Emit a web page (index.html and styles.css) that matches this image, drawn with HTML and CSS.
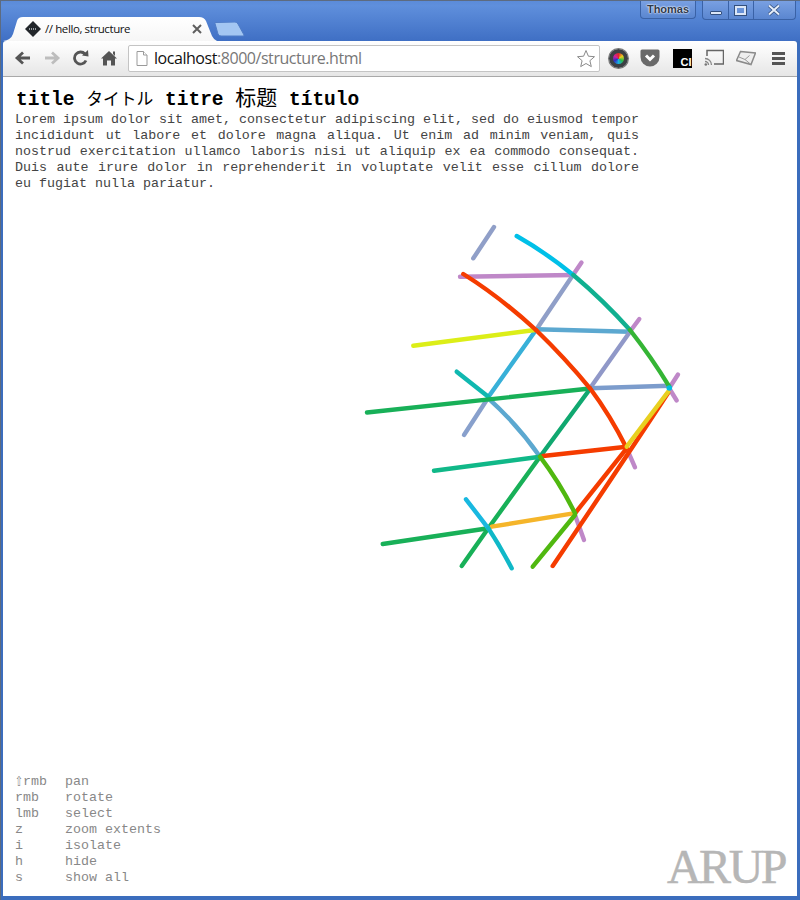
FILE: index.html
```html
<!DOCTYPE html>
<html lang="en">
<head>
  <meta charset="UTF-8">
  <title>// hello, structure</title>
  <link rel="stylesheet" href="styles.css">
</head>
<body>
  <div class="window">
    <div class="titlebar">
      <div class="controls">
        <div class="user-btn">Thomas</div>
        <div class="win-btns">
          <div class="win-btn min"><span class="min-bar"></span></div>
          <div class="win-btn max"><span class="max-box"></span></div>
          <div class="win-btn close">
            <svg width="16" height="12" viewBox="0 0 16 12"><path class="x-glow" d="M3 1.5L13 10.5M13 1.5L3 10.5"/><path class="x-mark" d="M3 1.5L13 10.5M13 1.5L3 10.5"/></svg>
          </div>
        </div>
      </div>
      <div class="tabstrip">
        <div class="tab">
          <svg class="favicon" width="16" height="16" viewBox="0 0 16 16"><path class="fav-bg" d="M8 0L16 8L8 16L0 8Z"/><path class="fav-mark" d="M4 8h8"/></svg>
          <span class="tab-title">// hello, structure</span>
          <svg class="tab-close" width="10" height="10" viewBox="0 0 10 10"><path d="M1 1L9 9M9 1L1 9"/></svg>
        </div>
        <svg class="new-tab" width="32" height="16" viewBox="0 0 32 16"><path d="M2 1.5Q1 .5 3 .5L22 0Q24 0 25 2L31 13Q31.500 14 30 14L8 14Q6 14 5 12Z"/></svg>
      </div>
    </div>

    <div class="toolbar">
      <div class="nav">
        <svg class="nav-icon" width="18" height="16" viewBox="0 0 18 16"><path class="arrow-back" d="M16 8H4M9 2.500L3 8L9 13.500"/></svg>
        <svg class="nav-icon" width="18" height="16" viewBox="0 0 18 16"><path class="arrow-fwd" d="M2 8H14M9 2.500L15 8L9 13.500"/></svg>
        <svg class="nav-icon" width="18" height="16" viewBox="0 0 18 16"><path class="reload" d="M14 10.500A6 6 0 1 1 13 4"/><path class="reload-tip" d="M10 5.500L16.500 6.500L16 0Z"/></svg>
        <svg class="nav-icon" width="18" height="16" viewBox="1 0 18 16"><path class="home" d="M9 1L17 8.500H15V15.500H11V10.500H7V15.500H3V8.500H1Z"/><path class="home" d="M13 1.500H15V6L13 4Z"/></svg>
      </div>
      <div class="omnibox">
        <svg class="page-icon" width="12" height="15" viewBox="0 0 12 15"><path d="M1 .5H7.500L11 4V14.500H1Z"/><path d="M7.500 .5V4H11"/></svg>
        <span class="url"><span class="host">localhost</span>:8000/structure.html</span>
        <svg class="star" width="20" height="19" viewBox="0 0 20 19"><path d="M10 1.500L12.400 7.200L18.500 7.700L13.900 11.700L15.300 17.600L10 14.500L4.700 17.600L6.100 11.700L1.500 7.700L7.600 7.200Z"/></svg>
      </div>
      <div class="extensions">
        <div class="ext"><span class="wheel"></span></div>
        <div class="ext">
          <svg width="20" height="18" viewBox="0 0 20 18"><path class="pocket" d="M2 .5H18Q19.500 .5 19.500 2V8A9.500 9.500 0 0 1 .5 8V2Q.5 .5 2 .5Z"/><path class="pocket-mark" d="M6 6.500L10 10.500L14 6.500"/></svg>
        </div>
        <div class="ext"><span class="ci">CI</span></div>
        <div class="ext">
          <svg width="20" height="18" viewBox="0 0 20 18"><path class="cast" d="M3 7V1.500H19.500V15H10"/><path class="cast-wave" d="M1 9.500A6.500 6.500 0 0 1 7.500 16M1 12.500A3.500 3.500 0 0 1 4.500 16"/><circle class="cast-dot" cx="1.800" cy="15.500" r="1.300"/></svg>
        </div>
        <div class="ext">
          <svg width="20" height="16" viewBox="0 0 20 16"><path class="mail" d="M4.500 1.500L19.500 3L15 14.500L.5 10.500Z"/><path class="mail-line" d="M3 7L9 9.500L13.500 5.500M9 9.500L15 14.500"/></svg>
        </div>
        <div class="ext"><span class="menu"></span></div>
      </div>
    </div>

    <div class="content">
      <div class="intro">
        <h1>title <span class="cjk kana" lang="ja">タイトル</span> titre <span class="cjk hanzi" lang="zh">标题</span> título</h1>
        <p>Lorem ipsum dolor sit amet, consectetur adipiscing elit, sed do eiusmod tempor incididunt ut labore et dolore magna aliqua. Ut enim ad minim veniam, quis nostrud exercitation ullamco laboris nisi ut aliquip ex ea commodo consequat. Duis aute irure dolor in reprehenderit in voluptate velit esse cillum dolore eu fugiat nulla pariatur.</p>
      </div>

      <div class="keys">
        <span><span class="shift">⇧</span>rmb</span><span>pan</span>
        <span>rmb</span><span>rotate</span>
        <span>lmb</span><span>select</span>
        <span>z</span><span>zoom extents</span>
        <span>i</span><span>isolate</span>
        <span>h</span><span>hide</span>
        <span>s</span><span>show all</span>
      </div>

      <!-- model view, coordinates are window pixels -->
      <svg class="model" width="794" height="819" viewBox="3 77 794 819">
        <path class="purple" d="M460 276.700L573 275"/>
        <path class="purple" d="M573 275L581.500 262.500"/>
        <path class="purple" d="M630 331.500L639.300 319"/>
        <path class="purple" d="M669 388.500L678 374.500"/>
        <path class="purple" d="M669 388L676.700 400.500"/>
        <path class="purple" d="M626.700 448.300L635 467.300"/>
        <path class="purple" d="M575 515L584 540"/>

        <path class="slate" d="M473.300 258.300L494 227"/>
        <path class="slate" d="M573 275L536 330"/>
        <path class="sky" d="M536 330L488.300 397"/>
        <path class="slate-2" d="M488 398L464 435"/>
        <path class="sky-2" d="M536 329.300L630 331.700"/>
        <path class="slate-3" d="M630 331.700L590 388.300"/>
        <path class="slate-4" d="M590 388.300L669.300 385.700"/>
        <path class="sky-2" d="M488.300 398.300Q517 424 540 456.700"/>

        <path class="cyan" d="M516.700 236Q545 252 573.300 275"/>
        <path class="teal" d="M573.300 275Q603 300 630 330"/>
        <path class="green-3" d="M630 330Q652 358 669.300 386.700"/>
        <path class="teal-2" d="M456.700 371.700L488.300 396.700"/>

        <path class="yellow-green" d="M413.300 345.700L535 330"/>
        <path class="green" d="M367 412.500L590 388.500"/>
        <path class="green-2" d="M590 389L540 456.700"/>
        <path class="green" d="M540 456.700L488.300 528.300"/>
        <path class="green" d="M488.300 528.300L461.700 566"/>
        <path class="teal-3" d="M434 470.700L540 456.700"/>
        <path class="green" d="M382.700 544L488.300 528.300"/>

        <path class="red" d="M463.300 274Q500 297 536 330"/>
        <path class="red" d="M536 330Q565 358 590 388.300"/>
        <path class="red" d="M590 388.300Q610 415 626.700 448.300"/>
        <path class="red" d="M543 456L626.700 446.700"/>
        <path class="red" d="M626.700 448.300L575 513.300"/>
        <path class="red" d="M668 393Q627 456 552.700 566"/>

        <path class="yellow" d="M626.700 446.700L668.300 391.700"/>
        <path class="orange" d="M491.700 526.700L573.300 513.300"/>
        <path class="lime" d="M540 456.700Q560 483 575 513.300"/>
        <path class="lime" d="M575 515L532.700 566.700"/>
        <path class="cyan-2" d="M466 499.300L488.300 528.300"/>
        <path class="cyan-3" d="M488.300 528.300Q500 546 511.700 568.300"/>
        <circle class="node" cx="669.300" cy="388" r="2.800"/>
      </svg>

      <div class="logo">ARUP</div>
    </div>
  </div>
</body>
</html>
```

FILE: styles.css
```css
html, body {
  margin: 0;
  padding: 0;
  background-color: #fff;
}
.window {
  box-sizing: border-box;
  width: 800px;
  height: 900px;
  display: flex;
  flex-direction: column;
  padding: 0 3px 4px 2px;
  background: #3b6dbd;
  border: 1px solid #5d6b80;
  border-width: 1px 0 0 1px;
  overflow: hidden;
}

/* title bar */
.titlebar {
  margin: 0 -3px 0 -2px;
  padding: 0 3px 0 2px;
  height: 40px;
  flex: none;
  display: flex;
  flex-direction: column;
  background: linear-gradient(#5b8bd9, #5f8fdc 12%, #3f6fc4);
}
.controls {
  height: 16px;
  flex: none;
  display: flex;
  justify-content: flex-end;
  gap: 6px;
  padding-right: 1px;
}
.user-btn {
  box-sizing: border-box;
  width: 56px;
  height: 18px;
  border: 1px solid #3a62a6;
  border-top: none;
  border-radius: 0 0 4px 4px;
  background: linear-gradient(#79a0e2, #5a86d0);
  color: #2e3a4c;
  font: bold 11px/16px "Liberation Sans", sans-serif;
  text-align: center;
  text-shadow: 0 0 2px #fff, 0 0 2px #fff;
}
.win-btns {
  display: flex;
  height: 18px;
  border: 1px solid #3a62a6;
  border-top: none;
  border-radius: 0 0 4px 4px;
  background: linear-gradient(#79a0e2, #5a86d0);
}
.win-btn {
  display: flex;
  align-items: center;
  justify-content: center;
  border-right: 1px solid #3a62a6;
}
.min { width: 25px; }
.max { width: 24px; }
.close { width: 39px; padding-right: 2px; border-right: none; }
.min-bar {
  width: 10px;
  height: 2px;
  margin-top: 5px;
  border: 1px solid #34507e;
  border-radius: 1px;
  background: #dce7f7;
}
.max-box {
  box-sizing: border-box;
  width: 11px;
  height: 9px;
  margin-right: 2px;
  border: 2px solid #dce7f7;
  outline: 1px solid #34507e;
}
.x-glow {
  fill: none;
  stroke: #34507e;
  stroke-width: 3.5;
}
.x-mark {
  fill: none;
  stroke: #e6eefa;
  stroke-width: 2;
}
.tabstrip {
  height: 24px;
  flex: none;
  display: flex;
  align-items: flex-start;
}
.tab {
  box-sizing: border-box;
  width: 214px;
  height: 24px;
  flex: none;
  display: flex;
  align-items: center;
  padding: 0 15px 1px 22px;
  background: linear-gradient(#fff, #f6f6f6);
  clip-path: path("M0 24Q8 23 10 17L14 4Q15 0 20 0H196Q201 0 203 4L209 19Q211 23 214 24Z");
}
.favicon { flex: none; }
.fav-bg { fill: #22262a; }
.fav-mark {
  stroke: #9aa0a4;
  stroke-width: 2;
  stroke-dasharray: 1 1;
}
.tab-title {
  flex: 1;
  margin-left: 4px;
  font: 11.500px "Open Sans", sans-serif;
  letter-spacing: -.4px;
  color: #111;
}
.tab-close {
  flex: none;
  fill: none;
  stroke: #5f5f5f;
  stroke-width: 2;
}
.new-tab {
  flex: none;
  margin: 5px 0 0 -4px;
}
.new-tab path {
  fill: #a3c6f2;
  stroke: #4f7cc6;
}

/* toolbar */
.toolbar {
  box-sizing: border-box;
  height: 36px;
  flex: none;
  display: flex;
  align-items: center;
  padding: 0 0 1px 11px;
  background: linear-gradient(#fff, #f8f8f8 30%, #e6e6e6);
  border-bottom: 1px solid #a9a9a9;
  border-radius: 3px 3px 0 0;
}
.nav {
  display: flex;
  gap: 11px;
}
.nav-icon { flex: none; }
.arrow-back, .arrow-fwd {
  fill: none;
  stroke-width: 2.800;
}
.arrow-back { stroke: #555; }
.arrow-fwd { stroke: #bdbdbd; }
.reload {
  fill: none;
  stroke: #555;
  stroke-width: 2.800;
}
.reload-tip { fill: #555; }
.home { fill: #555; }
.omnibox {
  box-sizing: border-box;
  width: 472px;
  height: 27px;
  margin-left: 9px;
  flex: none;
  display: flex;
  align-items: center;
  padding: 0 3px 0 7px;
  background: #fff;
  border: 1px solid #c4c4c4;
  border-radius: 2px;
}
.page-icon {
  flex: none;
  fill: #fff;
  stroke: #9a9a9a;
}
.url {
  flex: 1;
  margin-left: 6px;
  font: 16px "Open Sans", sans-serif;
  letter-spacing: -.45px;
  color: #777;
}
.host { color: #111; }
.star {
  flex: none;
  fill: #fff;
  stroke: #8a8a8a;
}
.extensions {
  display: flex;
  margin-left: 2px;
}
.ext {
  width: 32px;
  height: 24px;
  display: flex;
  align-items: center;
  justify-content: center;
}
.wheel {
  box-sizing: border-box;
  width: 19px;
  height: 19px;
  border: 4px solid #3c4044;
  border-radius: 50%;
  background: conic-gradient(#e2262a, #e8d020, #2ab84a, #18b0e0, #3030c0, #d020a0, #e2262a);
  box-shadow: 0 0 0 1px #777;
}
.pocket { fill: #6a6a6a; }
.pocket-mark {
  fill: none;
  stroke: #fff;
  stroke-width: 3;
}
.ci {
  box-sizing: border-box;
  width: 19px;
  height: 19px;
  display: flex;
  align-items: flex-end;
  justify-content: flex-end;
  background: #000;
  color: #fff;
  font: bold 11px/11px "Liberation Sans", sans-serif;
}
.cast {
  fill: none;
  stroke: #666;
  stroke-width: 1.500;
}
.cast-wave {
  fill: none;
  stroke: #888;
  stroke-width: 1.300;
}
.cast-dot { fill: #777; }
.mail {
  fill: #eee;
  stroke: #8a8a8a;
  stroke-width: 1.500;
}
.mail-line {
  fill: none;
  stroke: #999;
}
.menu {
  box-sizing: border-box;
  width: 13px;
  height: 13px;
  border-top: 3px solid #555;
  border-bottom: 3px solid #555;
  background: linear-gradient(transparent 2px, #555 2px, #555 5px, transparent 5px);
}

/* page */
.content {
  flex: 1;
  position: relative;
  display: flex;
  flex-direction: column;
  justify-content: space-between;
  padding: 9px 12px 10px 12px;
  background: #fff;
  font-family: "Liberation Mono", "Courier New", monospace;
}
.intro {
  width: 624px;
}
h1 {
  margin: 0 0 0 1px;
  font-size: 19.500px;
  line-height: 24px;
  font-weight: bold;
  color: #000;
}
.cjk {
  font-family: "Noto Sans CJK JP", "Noto Sans CJK SC", sans-serif;
  font-weight: normal;
  line-height: 20px;
}
.kana {
  font-size: 16.800px;
}
.hanzi {
  font-size: 21px;
}
p {
  margin: 0;
  font-size: 13.330px;
  line-height: 16px;
  color: #444;
  text-align: justify;
}
.keys {
  display: grid;
  grid-template-columns: 50px auto;
  justify-content: start;
  font-size: 13.330px;
  line-height: 16px;
  color: #888;
}
.shift {
  display: inline-block;
  width: 8px;
  font-family: "DejaVu Sans", sans-serif;
  font-size: 9.500px;
  line-height: 14px;
  transform: scaleY(1.4);
}
.model {
  position: absolute;
  left: 0;
  top: 0;
  pointer-events: none;
}
.model path {
  fill: none;
  stroke-width: 4.400;
  stroke-linecap: round;
}
.purple { stroke: #bf88c8; }
.slate { stroke: #909fc8; }
.slate-2 { stroke: #88a0cc; }
.slate-3 { stroke: #9098c8; }
.slate-4 { stroke: #7c9ccc; }
.sky { stroke: #38b0d8; }
.sky-2 { stroke: #5ca8d0; }
.cyan { stroke: #00c0e8; }
.cyan-2 { stroke: #18b8e0; }
.cyan-3 { stroke: #10b8c8; }
.teal { stroke: #10b090; }
.teal-2 { stroke: #10b8b0; }
.teal-3 { stroke: #10b888; }
.green { stroke: #18b058; }
.green-2 { stroke: #10a870; }
.green-3 { stroke: #35b535; }
.lime { stroke: #50b810; }
.yellow-green { stroke: #dcee18; }
.yellow { stroke: #e8d020; }
.orange { stroke: #f5b52a; }
.red { stroke: #f53c00; }
.node { fill: #00c0e0; }
.logo {
  position: absolute;
  right: 12px;
  bottom: 5px;
  font-family: "Liberation Serif", serif;
  font-size: 48px;
  line-height: 48px;
  letter-spacing: -2.500px;
  color: #b6b6b6;
  -webkit-text-stroke: .5px #b6b6b6;
}
```
